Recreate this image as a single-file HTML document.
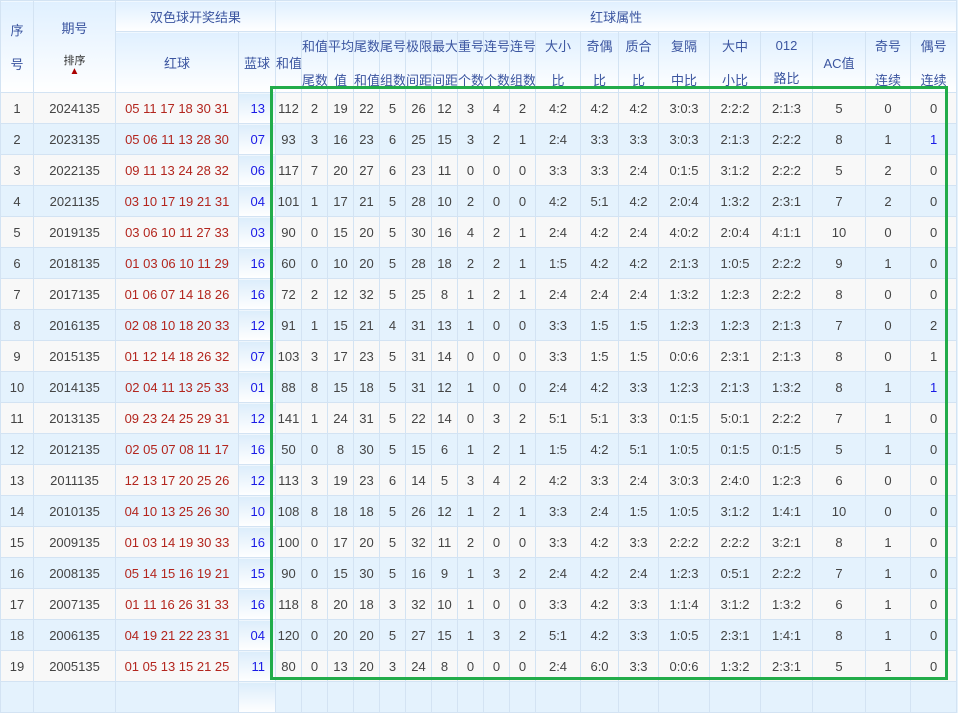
<!DOCTYPE html><html><head><meta charset="utf-8"><style>
body{margin:0;width:958px;height:688px;overflow:hidden;background:#e6f3fd;font-family:"Liberation Sans","Noto Sans CJK SC",sans-serif;}
table{border-collapse:collapse;table-layout:fixed;position:absolute;left:0;top:0;width:957px;font-size:13px;color:#444;}
td,th{border:1px solid #d3e3f3;text-align:center;padding:0;white-space:nowrap;overflow:hidden;}
th{font-weight:normal;color:#3b55a0;background:linear-gradient(#e0f0ff,#fff);font-size:13px;}
th.s{line-height:31px;}
tr.h1{height:31px}tr.h2{height:61px}
tbody tr{height:31px}
tbody tr:nth-child(odd) td{background:#f8f8f8}
tbody tr:nth-child(even) td{background:#e4f2fd}
td.r{color:#b3261e}
tbody tr td.b{color:#1a1ae6;background:linear-gradient(#dcedfb,#fff)!important;text-align:right;padding-right:10px}
.g{position:absolute;left:270px;top:86px;width:672px;height:588px;border:3px solid #22ac4a;}
.ar{display:block;color:#a00;font-size:10px;line-height:8px}
</style></head><body>
<table>
<colgroup><col style="width:33px"><col style="width:82px"><col style="width:123px"><col style="width:37px"><col style="width:26px"><col style="width:26px"><col style="width:26px"><col style="width:26px"><col style="width:26px"><col style="width:26px"><col style="width:26px"><col style="width:26px"><col style="width:26px"><col style="width:26px"><col style="width:45px"><col style="width:38px"><col style="width:40px"><col style="width:51px"><col style="width:51px"><col style="width:52px"><col style="width:53px"><col style="width:45px"><col style="width:46px"></colgroup>
<thead>
<tr class="h1"><th rowspan="2">序<br><br>号</th><th rowspan="2">期号<br><br><span style="color:#333;font-size:11px">排序</span><span class="ar">▲</span></th><th colspan="2">双色球开奖结果</th><th colspan="19">红球属性</th></tr>
<tr class="h2"><th>红球</th><th>蓝球</th><th>和值</th><th>和值<br><br>尾数</th><th>平均<br><br>值</th><th>尾数<br><br>和值</th><th>尾号<br><br>组数</th><th>极限<br><br>间距</th><th>最大<br><br>间距</th><th>重号<br><br>个数</th><th>连号<br><br>个数</th><th>连号<br><br>组数</th><th>大小<br><br>比</th><th>奇偶<br><br>比</th><th>质合<br><br>比</th><th>复隔<br><br>中比</th><th>大中<br><br>小比</th><th>012<br><br>路比</th><th>AC值</th><th>奇号<br><br>连续</th><th>偶号<br><br>连续</th></tr>
</thead><tbody>
<tr><td>1</td><td>2024135</td><td class="r">05 11 17 18 30 31</td><td class="b">13</td><td>112</td><td>2</td><td>19</td><td>22</td><td>5</td><td>26</td><td>12</td><td>3</td><td>4</td><td>2</td><td>4:2</td><td>4:2</td><td>4:2</td><td>3:0:3</td><td>2:2:2</td><td>2:1:3</td><td>5</td><td>0</td><td>0</td></tr>
<tr><td>2</td><td>2023135</td><td class="r">05 06 11 13 28 30</td><td class="b">07</td><td>93</td><td>3</td><td>16</td><td>23</td><td>6</td><td>25</td><td>15</td><td>3</td><td>2</td><td>1</td><td>2:4</td><td>3:3</td><td>3:3</td><td>3:0:3</td><td>2:1:3</td><td>2:2:2</td><td>8</td><td>1</td><td style="color:#1a1ae6">1</td></tr>
<tr><td>3</td><td>2022135</td><td class="r">09 11 13 24 28 32</td><td class="b">06</td><td>117</td><td>7</td><td>20</td><td>27</td><td>6</td><td>23</td><td>11</td><td>0</td><td>0</td><td>0</td><td>3:3</td><td>3:3</td><td>2:4</td><td>0:1:5</td><td>3:1:2</td><td>2:2:2</td><td>5</td><td>2</td><td>0</td></tr>
<tr><td>4</td><td>2021135</td><td class="r">03 10 17 19 21 31</td><td class="b">04</td><td>101</td><td>1</td><td>17</td><td>21</td><td>5</td><td>28</td><td>10</td><td>2</td><td>0</td><td>0</td><td>4:2</td><td>5:1</td><td>4:2</td><td>2:0:4</td><td>1:3:2</td><td>2:3:1</td><td>7</td><td>2</td><td>0</td></tr>
<tr><td>5</td><td>2019135</td><td class="r">03 06 10 11 27 33</td><td class="b">03</td><td>90</td><td>0</td><td>15</td><td>20</td><td>5</td><td>30</td><td>16</td><td>4</td><td>2</td><td>1</td><td>2:4</td><td>4:2</td><td>2:4</td><td>4:0:2</td><td>2:0:4</td><td>4:1:1</td><td>10</td><td>0</td><td>0</td></tr>
<tr><td>6</td><td>2018135</td><td class="r">01 03 06 10 11 29</td><td class="b">16</td><td>60</td><td>0</td><td>10</td><td>20</td><td>5</td><td>28</td><td>18</td><td>2</td><td>2</td><td>1</td><td>1:5</td><td>4:2</td><td>4:2</td><td>2:1:3</td><td>1:0:5</td><td>2:2:2</td><td>9</td><td>1</td><td>0</td></tr>
<tr><td>7</td><td>2017135</td><td class="r">01 06 07 14 18 26</td><td class="b">16</td><td>72</td><td>2</td><td>12</td><td>32</td><td>5</td><td>25</td><td>8</td><td>1</td><td>2</td><td>1</td><td>2:4</td><td>2:4</td><td>2:4</td><td>1:3:2</td><td>1:2:3</td><td>2:2:2</td><td>8</td><td>0</td><td>0</td></tr>
<tr><td>8</td><td>2016135</td><td class="r">02 08 10 18 20 33</td><td class="b">12</td><td>91</td><td>1</td><td>15</td><td>21</td><td>4</td><td>31</td><td>13</td><td>1</td><td>0</td><td>0</td><td>3:3</td><td>1:5</td><td>1:5</td><td>1:2:3</td><td>1:2:3</td><td>2:1:3</td><td>7</td><td>0</td><td>2</td></tr>
<tr><td>9</td><td>2015135</td><td class="r">01 12 14 18 26 32</td><td class="b">07</td><td>103</td><td>3</td><td>17</td><td>23</td><td>5</td><td>31</td><td>14</td><td>0</td><td>0</td><td>0</td><td>3:3</td><td>1:5</td><td>1:5</td><td>0:0:6</td><td>2:3:1</td><td>2:1:3</td><td>8</td><td>0</td><td>1</td></tr>
<tr><td>10</td><td>2014135</td><td class="r">02 04 11 13 25 33</td><td class="b">01</td><td>88</td><td>8</td><td>15</td><td>18</td><td>5</td><td>31</td><td>12</td><td>1</td><td>0</td><td>0</td><td>2:4</td><td>4:2</td><td>3:3</td><td>1:2:3</td><td>2:1:3</td><td>1:3:2</td><td>8</td><td>1</td><td style="color:#1a1ae6">1</td></tr>
<tr><td>11</td><td>2013135</td><td class="r">09 23 24 25 29 31</td><td class="b">12</td><td>141</td><td>1</td><td>24</td><td>31</td><td>5</td><td>22</td><td>14</td><td>0</td><td>3</td><td>2</td><td>5:1</td><td>5:1</td><td>3:3</td><td>0:1:5</td><td>5:0:1</td><td>2:2:2</td><td>7</td><td>1</td><td>0</td></tr>
<tr><td>12</td><td>2012135</td><td class="r">02 05 07 08 11 17</td><td class="b">16</td><td>50</td><td>0</td><td>8</td><td>30</td><td>5</td><td>15</td><td>6</td><td>1</td><td>2</td><td>1</td><td>1:5</td><td>4:2</td><td>5:1</td><td>1:0:5</td><td>0:1:5</td><td>0:1:5</td><td>5</td><td>1</td><td>0</td></tr>
<tr><td>13</td><td>2011135</td><td class="r">12 13 17 20 25 26</td><td class="b">12</td><td>113</td><td>3</td><td>19</td><td>23</td><td>6</td><td>14</td><td>5</td><td>3</td><td>4</td><td>2</td><td>4:2</td><td>3:3</td><td>2:4</td><td>3:0:3</td><td>2:4:0</td><td>1:2:3</td><td>6</td><td>0</td><td>0</td></tr>
<tr><td>14</td><td>2010135</td><td class="r">04 10 13 25 26 30</td><td class="b">10</td><td>108</td><td>8</td><td>18</td><td>18</td><td>5</td><td>26</td><td>12</td><td>1</td><td>2</td><td>1</td><td>3:3</td><td>2:4</td><td>1:5</td><td>1:0:5</td><td>3:1:2</td><td>1:4:1</td><td>10</td><td>0</td><td>0</td></tr>
<tr><td>15</td><td>2009135</td><td class="r">01 03 14 19 30 33</td><td class="b">16</td><td>100</td><td>0</td><td>17</td><td>20</td><td>5</td><td>32</td><td>11</td><td>2</td><td>0</td><td>0</td><td>3:3</td><td>4:2</td><td>3:3</td><td>2:2:2</td><td>2:2:2</td><td>3:2:1</td><td>8</td><td>1</td><td>0</td></tr>
<tr><td>16</td><td>2008135</td><td class="r">05 14 15 16 19 21</td><td class="b">15</td><td>90</td><td>0</td><td>15</td><td>30</td><td>5</td><td>16</td><td>9</td><td>1</td><td>3</td><td>2</td><td>2:4</td><td>4:2</td><td>2:4</td><td>1:2:3</td><td>0:5:1</td><td>2:2:2</td><td>7</td><td>1</td><td>0</td></tr>
<tr><td>17</td><td>2007135</td><td class="r">01 11 16 26 31 33</td><td class="b">16</td><td>118</td><td>8</td><td>20</td><td>18</td><td>3</td><td>32</td><td>10</td><td>1</td><td>0</td><td>0</td><td>3:3</td><td>4:2</td><td>3:3</td><td>1:1:4</td><td>3:1:2</td><td>1:3:2</td><td>6</td><td>1</td><td>0</td></tr>
<tr><td>18</td><td>2006135</td><td class="r">04 19 21 22 23 31</td><td class="b">04</td><td>120</td><td>0</td><td>20</td><td>20</td><td>5</td><td>27</td><td>15</td><td>1</td><td>3</td><td>2</td><td>5:1</td><td>4:2</td><td>3:3</td><td>1:0:5</td><td>2:3:1</td><td>1:4:1</td><td>8</td><td>1</td><td>0</td></tr>
<tr><td>19</td><td>2005135</td><td class="r">01 05 13 15 21 25</td><td class="b">11</td><td>80</td><td>0</td><td>13</td><td>20</td><td>3</td><td>24</td><td>8</td><td>0</td><td>0</td><td>0</td><td>2:4</td><td>6:0</td><td>3:3</td><td>0:0:6</td><td>1:3:2</td><td>2:3:1</td><td>5</td><td>1</td><td>0</td></tr>
<tr><td></td><td></td><td></td><td class="b"></td><td></td><td></td><td></td><td></td><td></td><td></td><td></td><td></td><td></td><td></td><td></td><td></td><td></td><td></td><td></td><td></td><td></td><td></td><td></td></tr>
</tbody></table>
<div class="g"></div>
</body></html>
